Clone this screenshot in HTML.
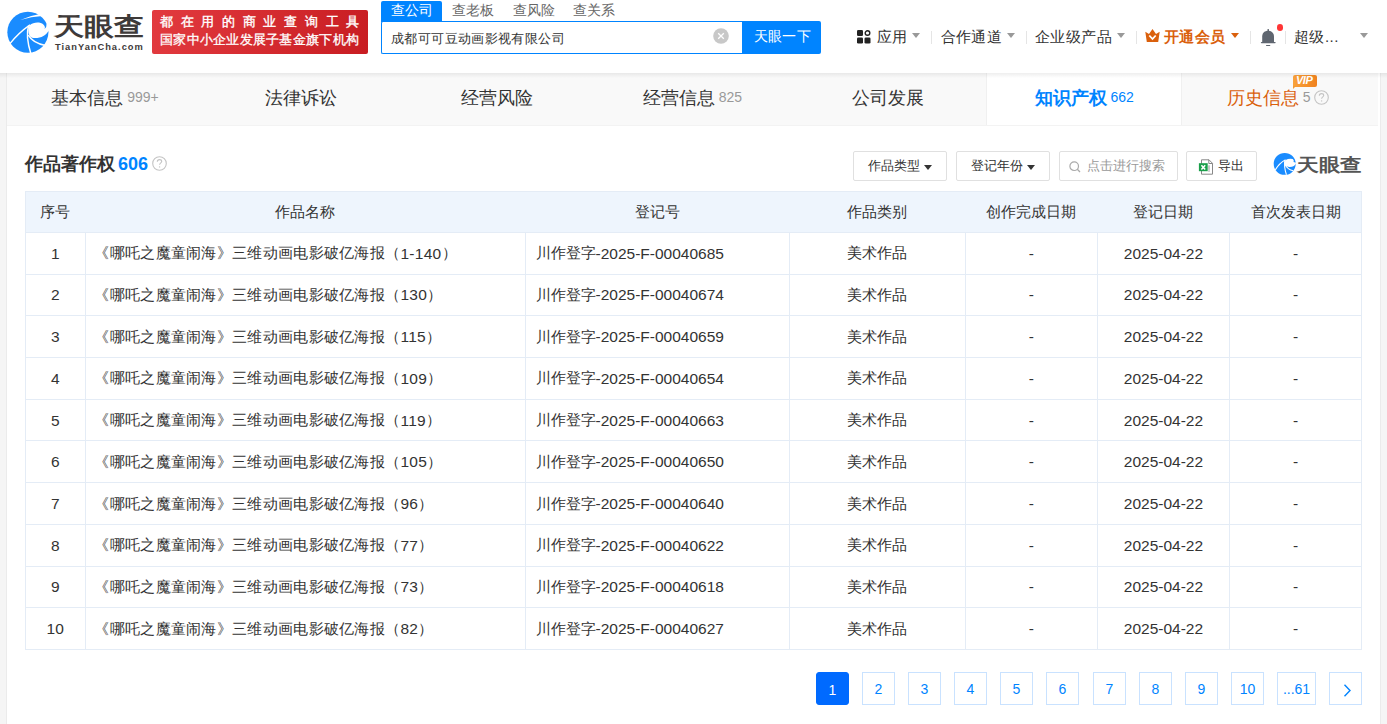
<!DOCTYPE html>
<html><head><meta charset="utf-8">
<style>
*{box-sizing:border-box;margin:0;padding:0}
html,body{width:1387px;height:724px;overflow:hidden;background:#f5f5f5;font-family:"Liberation Sans",sans-serif;color:#333}
.abs{position:absolute}
#hdr{position:absolute;left:0;top:0;width:1387px;height:73px;background:#fff;z-index:2}
.nw{white-space:nowrap}
#tabs{position:absolute;left:7px;top:73px;width:1371px;height:53px;background:#f9f9f9;border-bottom:1px solid #f3f3f3}
#shd{position:absolute;left:0;top:73px;width:1387px;height:5px;background:linear-gradient(rgba(0,0,0,0.065),rgba(0,0,0,0));z-index:3}
.gl{position:absolute;top:73px;width:1px;height:651px;background:#ebebeb}
.tab{position:absolute;top:0;height:52px;width:195.857px;text-align:center;font-size:18px;line-height:51px;color:#333;white-space:nowrap}
.tab .c{font-size:14px;color:#999;margin-left:4px;position:relative;top:-2px}
.qm{display:inline-block;position:relative;top:-2px;margin-left:4px;vertical-align:middle}
.vip{position:absolute;top:2px;left:1286px;width:24px;height:12px;border-radius:2px 2px 2px 0;background:linear-gradient(90deg,#f9a23c,#f0821e)}
#main{position:absolute;left:7px;top:73px;width:1373px;height:651px;background:#fff}
.btn{position:absolute;top:151px;height:30px;border:1px solid #e0e0e0;border-radius:2px;background:#fff;font-size:13px;line-height:28px;white-space:nowrap}
.caret{display:inline-block;margin-left:4px;margin-top:1px;width:0;height:0;border-left:4px solid transparent;border-right:4px solid transparent;border-top:5px solid #333;vertical-align:middle}
.row{position:absolute;left:25px;width:1337px;border-bottom:1px solid #e4ecf6}
.cell{position:absolute;top:0;height:100%;font-size:15px;display:flex;align-items:center;white-space:nowrap}
.pg{position:absolute;top:672px;height:33px;width:33px;border:1px solid #c9e2ff;color:#0084ff;font-size:14px;text-align:center;line-height:33px;background:#fff}
.th{position:absolute;font-size:15px;padding-top:2px;display:flex;align-items:center;justify-content:center;white-space:nowrap;color:#333}
.hl{position:absolute;left:25px;width:1337px;height:1px;background:#e4ecf6}
.vl{position:absolute;width:1px;background:#e4ecf6}
.td{position:absolute;font-size:15px;display:flex;align-items:center;white-space:nowrap;color:#333;padding-top:1px}
.a{font-size:15.5px}
.td[style*="center"]{justify-content:center}
.pg.act{background:#006aff;border-color:#006aff;line-height:34px;color:#fff;border-radius:3px}
.ncar{position:absolute;top:33px;width:0;height:0;border-left:4px solid transparent;border-right:4px solid transparent;border-top:5px solid #999}
.nsep{position:absolute;top:31px;width:1px;height:13px;background:#e5e5e5}
</style></head><body>
<div id="hdr">
  <!-- logo -->
  <svg class="abs" style="left:6px;top:10px" width="44" height="44" viewBox="0 0 724 724">
    <circle cx="360" cy="365" r="338" fill="#1a8cff"/>
    <path d="M390 250 C450 200 560 190 615 240 C645 268 645 300 635 312 L724 300 L724 345 L700 340 C660 420 560 475 430 458 C365 425 350 330 390 250 Z" fill="#fff"/>
    <path d="M668 222 Q672 285 635 312 L724 312 L724 222 Z" fill="#fff"/>
    <path d="M55 565 Q200 380 395 245" fill="none" stroke="#fff" stroke-width="22"/>
    <path d="M235 165 Q390 92 540 70 L600 100 Q420 112 235 165 Z" fill="#fff"/>
    <path d="M372 258 Q318 430 410 720" fill="none" stroke="#fff" stroke-width="24"/>
    <path d="M368 415 Q440 545 650 585" fill="none" stroke="#fff" stroke-width="24"/>
  </svg>
  <div class="abs nw" style="left:54px;top:10.6px;font-size:25px;font-weight:bold;color:#3e3a39;line-height:30px;transform:scaleX(1.2);transform-origin:0 0">天眼查</div>
  <div class="abs nw" style="left:55px;top:42px;font-size:9.3px;font-weight:bold;color:#3e3a39;letter-spacing:1px;line-height:11px">TianYanCha.com</div>
  <!-- red banner -->
  <div class="abs" style="left:152px;top:10px;width:216px;height:44px;border-radius:2px;background:linear-gradient(100deg,#e23a3f,#c81d22)"></div>
  <div class="abs nw" style="left:160px;top:13px;font-size:13px;line-height:17px;color:#fff;letter-spacing:7.7px;-webkit-text-stroke:0.35px #fff">都在用的商业查询工具</div>
  <div class="abs nw" style="left:160px;top:31px;font-size:13px;line-height:17px;color:#fff;letter-spacing:0.27px;-webkit-text-stroke:0.3px #fff">国家中小企业发展子基金旗下机构</div>
  <!-- search -->
  <div class="abs" style="left:381px;top:1px;width:61px;height:21px;background:#0084ff;border-radius:2px 2px 0 0"></div>
  <div class="abs nw" style="left:390.5px;top:1.5px;font-size:13.5px;line-height:18px;color:#fff">查公司</div>
  <div class="abs nw" style="left:451.5px;top:1.5px;font-size:13.5px;line-height:18px;color:#666">查老板</div>
  <div class="abs nw" style="left:512.5px;top:1.5px;font-size:13.5px;line-height:18px;color:#666">查风险</div>
  <div class="abs nw" style="left:572.5px;top:1.5px;font-size:13.5px;line-height:18px;color:#666">查关系</div>
  <div class="abs" style="left:381px;top:21px;width:362px;height:33px;border:1px solid #0084ff;border-right:none;border-radius:2px 0 0 2px;background:#fff"></div>
  <div class="abs nw" style="left:391px;top:29.5px;font-size:13px;letter-spacing:0.38px;line-height:18px;color:#333">成都可可豆动画影视有限公司</div>
  <svg class="abs" style="left:712.8px;top:28.2px" width="16" height="16" viewBox="0 0 16 16"><circle cx="8" cy="8" r="7.8" fill="#c8c8c8"/><path d="M5.2 5.2 L10.8 10.8 M10.8 5.2 L5.2 10.8" stroke="#fff" stroke-width="1.3"/></svg>
  <div class="abs" style="left:742px;top:21px;width:79px;height:33px;background:#0084ff;border-radius:0 2px 2px 0"></div>
  <div class="abs nw" style="left:754px;top:28px;font-size:13.5px;line-height:18px;color:#fff;letter-spacing:0.2px">天眼一下</div>
  <!-- navicons -->
  <svg class="abs" style="left:857px;top:30px" width="14" height="14" viewBox="0 0 14 14">
    <rect x="0" y="0" width="6" height="6" rx="1.3" fill="#222"/>
    <circle cx="10.5" cy="3" r="2.3" fill="none" stroke="#222" stroke-width="1.4"/>
    <rect x="0" y="7.5" width="6" height="6" rx="1.3" fill="#222"/>
    <rect x="7.5" y="7.5" width="6" height="6" rx="1.3" fill="#222"/>
  </svg>
  <div class="ncar" style="left:912px"></div>
  <div class="nsep" style="left:931px"></div>
  <div class="ncar" style="left:1007px"></div>
  <div class="nsep" style="left:1026px"></div>
  <div class="ncar" style="left:1117px"></div>
  <div class="nsep" style="left:1136px"></div>
  <svg class="abs" style="left:1145px;top:29px" width="15" height="13" viewBox="0 0 15 13">
    <path d="M0.3 2.8 L4 5 L7.5 0 L11 5 L14.7 2.8 L13.2 13 L1.8 13 Z" fill="#da600c"/>
    <path d="M4.3 6.5 L7.5 10 L10.7 6.5" fill="none" stroke="#fff" stroke-width="1.8"/>
  </svg>
  <div class="ncar" style="left:1231px;border-top-color:#da600c"></div>
  <div class="nsep" style="left:1250px"></div>
  <svg class="abs" style="left:1260px;top:28px" width="17" height="19" viewBox="0 0 17 19">
    <path d="M2.2 14.2 L2.2 8.6 C2.2 4.9 4.8 2.8 8.2 2.8 C11.6 2.8 14 4.9 14 8.6 L14 14.2 Z" fill="#5f6670"/>
    <rect x="0.8" y="13.9" width="14.9" height="1.4" rx="0.7" fill="#5f6670"/>
    <rect x="7.5" y="1" width="1.5" height="2.5" rx="0.5" fill="#5f6670"/>
    <rect x="6" y="17" width="4.3" height="1.1" rx="0.5" fill="#5f6670"/>
  </svg>
  <div class="abs" style="left:1276.7px;top:24.1px;width:6.4px;height:6.8px;border-radius:50%;background:#ff3535"></div>
  <div class="nsep" style="left:1285px"></div>
  <div class="ncar" style="left:1360px"></div>
  <!-- nav -->
  <div class="abs nw" style="left:876.5px;top:27px;font-size:15px;letter-spacing:0.45px;line-height:20px">应用</div>
  <div class="abs nw" style="left:940.5px;top:27px;font-size:15px;letter-spacing:0.45px;line-height:20px">合作通道</div>
  <div class="abs nw" style="left:1035px;top:27px;font-size:15px;letter-spacing:0.45px;line-height:20px">企业级产品</div>
  <div class="abs nw" style="left:1164px;top:27px;font-size:15px;letter-spacing:0.45px;line-height:20px;font-weight:bold;color:#da600c">开通会员</div>
  <div class="abs nw" style="left:1294px;top:27px;font-size:15px;letter-spacing:0.45px;line-height:20px">超级...</div>
</div>

<div id="main"></div>
<div class="gl" style="left:6px"></div><div class="gl" style="left:1380px"></div>
<div id="shd"></div>
<div id="tabs">
  <div class="tab" style="left:0">基本信息<span class="c">999+</span></div>
  <div class="tab" style="left:195.857px">法律诉讼</div>
  <div class="tab" style="left:391.714px">经营风险</div>
  <div class="tab" style="left:587.571px">经营信息<span class="c">825</span></div>
  <div class="tab" style="left:783.428px">公司发展</div>
  <div class="tab" style="left:979.285px;border-left:1px solid #f0f0f0;border-right:1px solid #f0f0f0;background:#fff;color:#0084ff;font-weight:bold">知识产权<span class="c" style="color:#0084ff;font-weight:normal">662</span></div>
  <div class="tab" style="left:1173.142px;color:#da600c">历史信息<span class="c">5</span><svg class="qm" width="15" height="15" viewBox="0 0 15 15"><circle cx="7.5" cy="7.5" r="6.8" fill="none" stroke="#c4c4c4" stroke-width="1.1"/><path d="M5.3 5.8 C5.3 4.3 6.3 3.6 7.5 3.6 C8.8 3.6 9.7 4.4 9.7 5.5 C9.7 6.8 7.6 7 7.6 8.8" fill="none" stroke="#c4c4c4" stroke-width="1.1"/><circle cx="7.6" cy="10.9" r="0.7" fill="#c4c4c4"/></svg></div>
  <div class="vip"><span style="position:absolute;left:3px;top:-1px;font-size:11px;line-height:13px;font-weight:bold;font-style:italic;color:#fff;letter-spacing:-0.5px">VIP</span><span style="position:absolute;left:0;top:11px;width:0;height:0;border-left:3px solid #f39a35;border-bottom:3px solid transparent"></span></div>
</div>


<div class="abs nw" style="left:25px;top:152px;font-size:18px;font-weight:bold;line-height:24px">作品著作权<span style="color:#0084ff;margin-left:3px">606</span></div>

<div class="btn" style="left:853px;width:94px;padding-left:14px">作品类型<span class="caret"></span></div>
<div class="btn" style="left:956px;width:94px;padding-left:14px">登记年份<span class="caret"></span></div>
<div class="btn" style="left:1059px;width:119px;padding-left:27px;color:#999">点击进行搜索</div>
<div class="btn" style="left:1186px;width:71px;padding-left:31px">导出</div>

<svg class="abs" style="left:152px;top:155.5px" width="15" height="15" viewBox="0 0 15 15"><circle cx="7.5" cy="7.5" r="6.8" fill="none" stroke="#c4c4c4" stroke-width="1.1"/><path d="M5.3 5.8 C5.3 4.3 6.3 3.6 7.5 3.6 C8.8 3.6 9.7 4.4 9.7 5.5 C9.7 6.8 7.6 7 7.6 8.8" fill="none" stroke="#c4c4c4" stroke-width="1.1"/><circle cx="7.6" cy="10.9" r="0.7" fill="#c4c4c4"/></svg>
<svg class="abs" style="left:1069px;top:160.5px" width="12" height="12" viewBox="0 0 12 12"><circle cx="5.2" cy="5.2" r="4.3" fill="none" stroke="#aaa" stroke-width="1.2"/><path d="M8.3 8.3 L11 11" stroke="#aaa" stroke-width="1.3"/></svg>
<svg class="abs" style="left:1198px;top:158.5px" width="16" height="16" viewBox="0 0 16 16"><path d="M3.5 0.8 L11 0.8 L14.5 4.3 L14.5 15.2 L3.5 15.2 Z" fill="#fff" stroke="#888" stroke-width="1"/><path d="M10.8 0.8 L10.8 4.5 L14.5 4.5" fill="none" stroke="#888" stroke-width="1"/><rect x="10" y="6.3" width="2" height="4.6" fill="#c8c8c8"/><rect x="10" y="11.6" width="2" height="0.8" fill="#999"/><rect x="0.9" y="4.2" width="8.8" height="8" fill="#1a9f4a"/><path d="M3.4 6.2 L7.2 10.6 M7.2 6.2 L3.4 10.6" stroke="#fff" stroke-width="1.5"/></svg>
<svg class="abs" style="left:1271.7px;top:151.1px" width="26.5" height="26.5" viewBox="0 0 724 724">
    <circle cx="347" cy="352" r="300" fill="#1a8cff"/>
    <path d="M360 250 Q470 195 565 220 Q610 250 590 300 L660 320 L660 330 Q620 445 470 440 Q380 425 345 370 Z" fill="#fff"/>
    <path d="M90 515 Q200 330 370 238" fill="none" stroke="#fff" stroke-width="30"/>
    <path d="M350 255 Q320 420 395 650" fill="none" stroke="#fff" stroke-width="30"/>
    <path d="M350 370 Q430 510 580 540" fill="none" stroke="#fff" stroke-width="30"/>
</svg>
<div class="abs nw" style="left:1297px;top:154px;font-size:18px;font-weight:bold;color:#555;line-height:22px;transform:scaleX(1.2);transform-origin:0 0">天眼查</div>
<div class="abs" style="left:25px;top:191.2px;width:1337px;height:458.8px;border:1px solid #e4ecf6"></div>
<div class="abs" style="left:26px;top:192.2px;width:1335px;height:40.20000000000002px;background:#eef5fd"></div>
<div class="th" style="left:25px;width:60.400000000000006px;top:191.2px;height:41.20000000000002px">序号</div>
<div class="th" style="left:85.4px;width:440.1px;top:191.2px;height:41.20000000000002px">作品名称</div>
<div class="th" style="left:525.5px;width:263.9px;top:191.2px;height:41.20000000000002px">登记号</div>
<div class="th" style="left:789.4px;width:176.0px;top:191.2px;height:41.20000000000002px">作品类别</div>
<div class="th" style="left:965.4px;width:131.89999999999998px;top:191.2px;height:41.20000000000002px">创作完成日期</div>
<div class="th" style="left:1097.3px;width:132.29999999999995px;top:191.2px;height:41.20000000000002px">登记日期</div>
<div class="th" style="left:1229.6px;width:131.9000000000001px;top:191.2px;height:41.20000000000002px">首次发表日期</div>
<div class="hl" style="top:231.90px"></div>
<div class="hl" style="top:273.61px"></div>
<div class="hl" style="top:315.32px"></div>
<div class="hl" style="top:357.03px"></div>
<div class="hl" style="top:398.74px"></div>
<div class="hl" style="top:440.45px"></div>
<div class="hl" style="top:482.16px"></div>
<div class="hl" style="top:523.87px"></div>
<div class="hl" style="top:565.58px"></div>
<div class="hl" style="top:607.29px"></div>
<div class="vl" style="left:84.90px;top:232.4px;height:417.6px"></div>
<div class="vl" style="left:525.00px;top:232.4px;height:417.6px"></div>
<div class="vl" style="left:788.90px;top:232.4px;height:417.6px"></div>
<div class="vl" style="left:964.90px;top:232.4px;height:417.6px"></div>
<div class="vl" style="left:1096.80px;top:232.4px;height:417.6px"></div>
<div class="vl" style="left:1229.10px;top:232.4px;height:417.6px"></div>
<div class="td" style="left:25px;width:60.400000000000006px;top:232.4px;height:41.71px;text-align:center;"><span class="a">1</span></div>
<div class="td" style="left:85.4px;width:440.1px;top:232.4px;height:41.71px;text-align:left;padding-left:9px;letter-spacing:0.3px;">《哪吒之魔童闹海》三维动画电影破亿海报（<span class="a">1-140</span>）</div>
<div class="td" style="left:525.5px;width:263.9px;top:232.4px;height:41.71px;text-align:left;padding-left:10px;">川作登字<span class="a">-2025-F-00040685</span></div>
<div class="td" style="left:789.4px;width:176.0px;top:232.4px;height:41.71px;text-align:center;">美术作品</div>
<div class="td" style="left:965.4px;width:131.89999999999998px;top:232.4px;height:41.71px;text-align:center;"><span class="a">-</span></div>
<div class="td" style="left:1097.3px;width:132.29999999999995px;top:232.4px;height:41.71px;text-align:center;"><span class="a">2025-04-22</span></div>
<div class="td" style="left:1229.6px;width:131.9000000000001px;top:232.4px;height:41.71px;text-align:center;"><span class="a">-</span></div>
<div class="td" style="left:25px;width:60.400000000000006px;top:274.11px;height:41.71px;text-align:center;"><span class="a">2</span></div>
<div class="td" style="left:85.4px;width:440.1px;top:274.11px;height:41.71px;text-align:left;padding-left:9px;letter-spacing:0.3px;">《哪吒之魔童闹海》三维动画电影破亿海报（<span class="a">130</span>）</div>
<div class="td" style="left:525.5px;width:263.9px;top:274.11px;height:41.71px;text-align:left;padding-left:10px;">川作登字<span class="a">-2025-F-00040674</span></div>
<div class="td" style="left:789.4px;width:176.0px;top:274.11px;height:41.71px;text-align:center;">美术作品</div>
<div class="td" style="left:965.4px;width:131.89999999999998px;top:274.11px;height:41.71px;text-align:center;"><span class="a">-</span></div>
<div class="td" style="left:1097.3px;width:132.29999999999995px;top:274.11px;height:41.71px;text-align:center;"><span class="a">2025-04-22</span></div>
<div class="td" style="left:1229.6px;width:131.9000000000001px;top:274.11px;height:41.71px;text-align:center;"><span class="a">-</span></div>
<div class="td" style="left:25px;width:60.400000000000006px;top:315.82px;height:41.71px;text-align:center;"><span class="a">3</span></div>
<div class="td" style="left:85.4px;width:440.1px;top:315.82px;height:41.71px;text-align:left;padding-left:9px;letter-spacing:0.3px;">《哪吒之魔童闹海》三维动画电影破亿海报（<span class="a">115</span>）</div>
<div class="td" style="left:525.5px;width:263.9px;top:315.82px;height:41.71px;text-align:left;padding-left:10px;">川作登字<span class="a">-2025-F-00040659</span></div>
<div class="td" style="left:789.4px;width:176.0px;top:315.82px;height:41.71px;text-align:center;">美术作品</div>
<div class="td" style="left:965.4px;width:131.89999999999998px;top:315.82px;height:41.71px;text-align:center;"><span class="a">-</span></div>
<div class="td" style="left:1097.3px;width:132.29999999999995px;top:315.82px;height:41.71px;text-align:center;"><span class="a">2025-04-22</span></div>
<div class="td" style="left:1229.6px;width:131.9000000000001px;top:315.82px;height:41.71px;text-align:center;"><span class="a">-</span></div>
<div class="td" style="left:25px;width:60.400000000000006px;top:357.53px;height:41.71px;text-align:center;"><span class="a">4</span></div>
<div class="td" style="left:85.4px;width:440.1px;top:357.53px;height:41.71px;text-align:left;padding-left:9px;letter-spacing:0.3px;">《哪吒之魔童闹海》三维动画电影破亿海报（<span class="a">109</span>）</div>
<div class="td" style="left:525.5px;width:263.9px;top:357.53px;height:41.71px;text-align:left;padding-left:10px;">川作登字<span class="a">-2025-F-00040654</span></div>
<div class="td" style="left:789.4px;width:176.0px;top:357.53px;height:41.71px;text-align:center;">美术作品</div>
<div class="td" style="left:965.4px;width:131.89999999999998px;top:357.53px;height:41.71px;text-align:center;"><span class="a">-</span></div>
<div class="td" style="left:1097.3px;width:132.29999999999995px;top:357.53px;height:41.71px;text-align:center;"><span class="a">2025-04-22</span></div>
<div class="td" style="left:1229.6px;width:131.9000000000001px;top:357.53px;height:41.71px;text-align:center;"><span class="a">-</span></div>
<div class="td" style="left:25px;width:60.400000000000006px;top:399.24px;height:41.71px;text-align:center;"><span class="a">5</span></div>
<div class="td" style="left:85.4px;width:440.1px;top:399.24px;height:41.71px;text-align:left;padding-left:9px;letter-spacing:0.3px;">《哪吒之魔童闹海》三维动画电影破亿海报（<span class="a">119</span>）</div>
<div class="td" style="left:525.5px;width:263.9px;top:399.24px;height:41.71px;text-align:left;padding-left:10px;">川作登字<span class="a">-2025-F-00040663</span></div>
<div class="td" style="left:789.4px;width:176.0px;top:399.24px;height:41.71px;text-align:center;">美术作品</div>
<div class="td" style="left:965.4px;width:131.89999999999998px;top:399.24px;height:41.71px;text-align:center;"><span class="a">-</span></div>
<div class="td" style="left:1097.3px;width:132.29999999999995px;top:399.24px;height:41.71px;text-align:center;"><span class="a">2025-04-22</span></div>
<div class="td" style="left:1229.6px;width:131.9000000000001px;top:399.24px;height:41.71px;text-align:center;"><span class="a">-</span></div>
<div class="td" style="left:25px;width:60.400000000000006px;top:440.95000000000005px;height:41.71px;text-align:center;"><span class="a">6</span></div>
<div class="td" style="left:85.4px;width:440.1px;top:440.95000000000005px;height:41.71px;text-align:left;padding-left:9px;letter-spacing:0.3px;">《哪吒之魔童闹海》三维动画电影破亿海报（<span class="a">105</span>）</div>
<div class="td" style="left:525.5px;width:263.9px;top:440.95000000000005px;height:41.71px;text-align:left;padding-left:10px;">川作登字<span class="a">-2025-F-00040650</span></div>
<div class="td" style="left:789.4px;width:176.0px;top:440.95000000000005px;height:41.71px;text-align:center;">美术作品</div>
<div class="td" style="left:965.4px;width:131.89999999999998px;top:440.95000000000005px;height:41.71px;text-align:center;"><span class="a">-</span></div>
<div class="td" style="left:1097.3px;width:132.29999999999995px;top:440.95000000000005px;height:41.71px;text-align:center;"><span class="a">2025-04-22</span></div>
<div class="td" style="left:1229.6px;width:131.9000000000001px;top:440.95000000000005px;height:41.71px;text-align:center;"><span class="a">-</span></div>
<div class="td" style="left:25px;width:60.400000000000006px;top:482.65999999999997px;height:41.71px;text-align:center;"><span class="a">7</span></div>
<div class="td" style="left:85.4px;width:440.1px;top:482.65999999999997px;height:41.71px;text-align:left;padding-left:9px;letter-spacing:0.3px;">《哪吒之魔童闹海》三维动画电影破亿海报（<span class="a">96</span>）</div>
<div class="td" style="left:525.5px;width:263.9px;top:482.65999999999997px;height:41.71px;text-align:left;padding-left:10px;">川作登字<span class="a">-2025-F-00040640</span></div>
<div class="td" style="left:789.4px;width:176.0px;top:482.65999999999997px;height:41.71px;text-align:center;">美术作品</div>
<div class="td" style="left:965.4px;width:131.89999999999998px;top:482.65999999999997px;height:41.71px;text-align:center;"><span class="a">-</span></div>
<div class="td" style="left:1097.3px;width:132.29999999999995px;top:482.65999999999997px;height:41.71px;text-align:center;"><span class="a">2025-04-22</span></div>
<div class="td" style="left:1229.6px;width:131.9000000000001px;top:482.65999999999997px;height:41.71px;text-align:center;"><span class="a">-</span></div>
<div class="td" style="left:25px;width:60.400000000000006px;top:524.37px;height:41.71px;text-align:center;"><span class="a">8</span></div>
<div class="td" style="left:85.4px;width:440.1px;top:524.37px;height:41.71px;text-align:left;padding-left:9px;letter-spacing:0.3px;">《哪吒之魔童闹海》三维动画电影破亿海报（<span class="a">77</span>）</div>
<div class="td" style="left:525.5px;width:263.9px;top:524.37px;height:41.71px;text-align:left;padding-left:10px;">川作登字<span class="a">-2025-F-00040622</span></div>
<div class="td" style="left:789.4px;width:176.0px;top:524.37px;height:41.71px;text-align:center;">美术作品</div>
<div class="td" style="left:965.4px;width:131.89999999999998px;top:524.37px;height:41.71px;text-align:center;"><span class="a">-</span></div>
<div class="td" style="left:1097.3px;width:132.29999999999995px;top:524.37px;height:41.71px;text-align:center;"><span class="a">2025-04-22</span></div>
<div class="td" style="left:1229.6px;width:131.9000000000001px;top:524.37px;height:41.71px;text-align:center;"><span class="a">-</span></div>
<div class="td" style="left:25px;width:60.400000000000006px;top:566.08px;height:41.71px;text-align:center;"><span class="a">9</span></div>
<div class="td" style="left:85.4px;width:440.1px;top:566.08px;height:41.71px;text-align:left;padding-left:9px;letter-spacing:0.3px;">《哪吒之魔童闹海》三维动画电影破亿海报（<span class="a">73</span>）</div>
<div class="td" style="left:525.5px;width:263.9px;top:566.08px;height:41.71px;text-align:left;padding-left:10px;">川作登字<span class="a">-2025-F-00040618</span></div>
<div class="td" style="left:789.4px;width:176.0px;top:566.08px;height:41.71px;text-align:center;">美术作品</div>
<div class="td" style="left:965.4px;width:131.89999999999998px;top:566.08px;height:41.71px;text-align:center;"><span class="a">-</span></div>
<div class="td" style="left:1097.3px;width:132.29999999999995px;top:566.08px;height:41.71px;text-align:center;"><span class="a">2025-04-22</span></div>
<div class="td" style="left:1229.6px;width:131.9000000000001px;top:566.08px;height:41.71px;text-align:center;"><span class="a">-</span></div>
<div class="td" style="left:25px;width:60.400000000000006px;top:607.79px;height:41.71px;text-align:center;"><span class="a">10</span></div>
<div class="td" style="left:85.4px;width:440.1px;top:607.79px;height:41.71px;text-align:left;padding-left:9px;letter-spacing:0.3px;">《哪吒之魔童闹海》三维动画电影破亿海报（<span class="a">82</span>）</div>
<div class="td" style="left:525.5px;width:263.9px;top:607.79px;height:41.71px;text-align:left;padding-left:10px;">川作登字<span class="a">-2025-F-00040627</span></div>
<div class="td" style="left:789.4px;width:176.0px;top:607.79px;height:41.71px;text-align:center;">美术作品</div>
<div class="td" style="left:965.4px;width:131.89999999999998px;top:607.79px;height:41.71px;text-align:center;"><span class="a">-</span></div>
<div class="td" style="left:1097.3px;width:132.29999999999995px;top:607.79px;height:41.71px;text-align:center;"><span class="a">2025-04-22</span></div>
<div class="td" style="left:1229.6px;width:131.9000000000001px;top:607.79px;height:41.71px;text-align:center;"><span class="a">-</span></div>
<div class="pg act" style="left:816px">1</div>
<div class="pg" style="left:862px">2</div>
<div class="pg" style="left:908px">3</div>
<div class="pg" style="left:954px">4</div>
<div class="pg" style="left:1000px">5</div>
<div class="pg" style="left:1046px">6</div>
<div class="pg" style="left:1093px">7</div>
<div class="pg" style="left:1139px">8</div>
<div class="pg" style="left:1185px">9</div>
<div class="pg" style="left:1231px">10</div>
<div class="pg" style="left:1277px;width:39px">...61</div>
<div class="pg" style="left:1329px"><svg width="9" height="13" viewBox="0 0 9 13" style="position:absolute;left:13px;top:10.5px"><path d="M1.5 0.8 L7 6.5 L1.5 12.2" fill="none" stroke="#0084ff" stroke-width="1.4"/></svg></div>
</body></html>
